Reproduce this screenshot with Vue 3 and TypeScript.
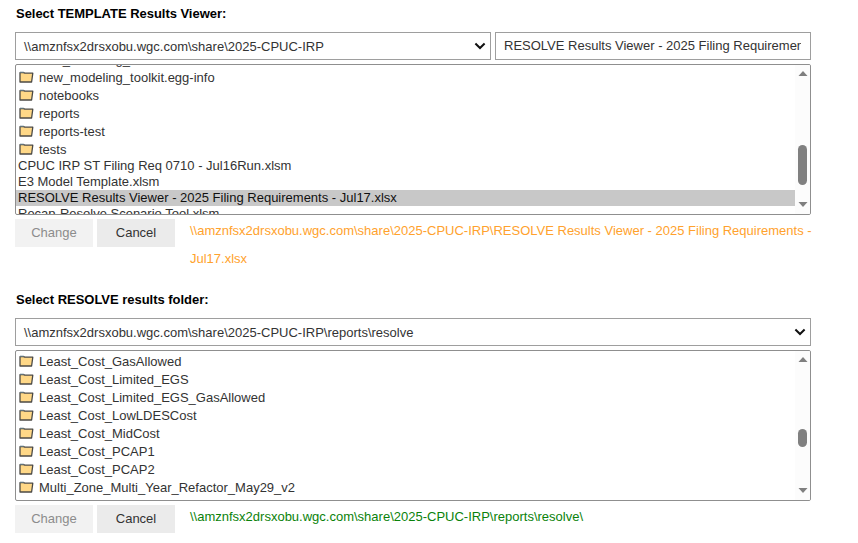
<script setup lang="ts">
interface Entry {
  name: string
  folder?: boolean
  selected?: boolean
}
interface Chooser {
  id: string
  title: string
  path: string
  filename?: string
  entries: Entry[]
  status: string
}

const folders = (names: string[]): Entry[] => names.map((name) => ({ name, folder: true }))

const choosers: Chooser[] = [
  {
    id: 'template',
    title: 'Select TEMPLATE Results Viewer:',
    path: '\\\\amznfsx2drsxobu.wgc.com\\share\\2025-CPUC-IRP',
    filename: 'RESOLVE Results Viewer - 2025 Filing Requiremen',
    entries: [
      ...folders(['new_modeling_toolkit', 'new_modeling_toolkit.egg-info', 'notebooks', 'reports', 'reports-test', 'tests']),
      { name: 'CPUC IRP ST Filing Req 0710 - Jul16Run.xlsm' },
      { name: 'E3 Model Template.xlsm' },
      { name: 'RESOLVE Results Viewer - 2025 Filing Requirements - Jul17.xlsx', selected: true },
      { name: 'Recap-Resolve Scenario Tool.xlsm' },
    ],
    status: '\\\\amznfsx2drsxobu.wgc.com\\share\\2025-CPUC-IRP\\RESOLVE Results Viewer - 2025 Filing Requirements - Jul17.xlsx',
  },
  {
    id: 'results',
    title: 'Select RESOLVE results folder:',
    path: '\\\\amznfsx2drsxobu.wgc.com\\share\\2025-CPUC-IRP\\reports\\resolve',
    entries: folders([
      'Least_Cost_GasAllowed',
      'Least_Cost_Limited_EGS',
      'Least_Cost_Limited_EGS_GasAllowed',
      'Least_Cost_LowLDESCost',
      'Least_Cost_MidCost',
      'Least_Cost_PCAP1',
      'Least_Cost_PCAP2',
      'Multi_Zone_Multi_Year_Refactor_May29_v2',
    ]),
    status: '\\\\amznfsx2drsxobu.wgc.com\\share\\2025-CPUC-IRP\\reports\\resolve\\',
  },
]
</script>

<template>
  <main class="page">
    <section v-for="c in choosers" :key="c.id" class="chooser" :class="c.id">
      <h2 class="title">{{ c.title }}</h2>
      <div class="fields">
        <div class="field path">
          <span class="value">{{ c.path }}</span>
          <svg class="chevron" width="12" height="8" viewBox="0 0 12 8">
            <path d="M1.4 1.5 L6 6 L10.6 1.5" fill="none" stroke="#111" stroke-width="2" />
          </svg>
        </div>
        <div v-if="c.filename" class="field filename"><span class="value">{{ c.filename }}</span></div>
      </div>
      <div class="listbox">
        <ul class="entries">
          <li v-for="e in c.entries" :key="e.name" class="entry" :class="{ folder: e.folder, selected: e.selected }">
            <svg v-if="e.folder" class="icon" width="15" height="12" viewBox="0 0 15 12">
              <path d="M1 11 V1.6 H4.6 L5.8 2.2 H13.8 L12.6 11 Z" fill="#ffd887" stroke="#4c4a45" stroke-width="1.3" stroke-linejoin="round" />
              <path d="M1 1.2 H4.8" stroke="#6f8794" stroke-width="1" />
            </svg>
            <span>{{ e.name }}</span>
          </li>
        </ul>
        <div class="scrollbar">
          <svg width="10" height="5" viewBox="0 0 10 5"><path d="M5 0 L9.5 5 H0.5 Z" fill="#7f7f7f" /></svg>
          <div class="track"><div class="thumb"></div></div>
          <svg width="10" height="5" viewBox="0 0 10 5"><path d="M0.5 0 H9.5 L5 5 Z" fill="#7f7f7f" /></svg>
        </div>
      </div>
      <div class="actions">
        <button class="btn" disabled>Change</button>
        <button class="btn">Cancel</button>
        <div class="status">{{ c.status }}</div>
      </div>
    </section>
  </main>
</template>

<style>
body {
  background: #fff;
}
</style>

<style scoped>
.page {
  box-sizing: border-box;
  width: 858px;
  height: 543px;
  overflow: hidden;
  padding-left: 15px;
  font: 13px/16px "Liberation Sans", Arial, sans-serif;
  color: #333;
}
.chooser {
  width: 798px;
  height: 286px;
}
.title {
  margin: 0;
  padding: 6px 0 10px 1px;
  font-size: 13px;
  line-height: 16px;
  font-weight: 700;
  letter-spacing: -0.03px;
  color: #000;
}
.fields {
  display: flex;
  gap: 4px;
  width: 796px;
}
.field {
  box-sizing: border-box;
  height: 28px;
  border: 1px solid #9e9e9e;
  display: flex;
  align-items: center;
  padding: 0 8px;
  white-space: nowrap;
}
.path {
  flex: 1;
  justify-content: space-between;
  padding-right: 4px;
}
.path .value {
  padding-top: 1px;
}
.filename {
  width: 316px;
}
.filename .value {
  overflow: hidden;
  width: 297px;
}
.listbox {
  box-sizing: border-box;
  width: 796px;
  height: 151px;
  margin-top: 4px;
  border: 1px solid #8f8f8f;
  border-radius: 2px;
  display: flex;
  overflow: hidden;
}
.entries {
  flex: 1;
  margin: 1px 0 0;
  padding: 0;
  list-style: none;
  white-space: nowrap;
}
.template .entries {
  margin-top: -15px;
}
.entry {
  display: flex;
  align-items: center;
  height: 16px;
  padding-left: 2px;
}
.folder {
  box-sizing: border-box;
  height: 18px;
  padding-top: 2px;
}
.icon {
  margin: 0 5px 2px 1px;
  flex: none;
}
.selected {
  background: #c8c8c8;
  color: #101010;
}
.scrollbar {
  box-sizing: border-box;
  width: 15px;
  padding: 6px 0 7px;
  background: #fcfcfc;
  display: flex;
  flex-direction: column;
  align-items: center;
}
.scrollbar svg {
  display: block;
  flex: none;
}
.track {
  flex: 1;
}
.thumb {
  width: 9px;
  height: 40px;
  margin-top: 69px;
  border-radius: 5px;
  background: #808080;
}
.results .thumb {
  height: 18px;
  margin-top: 67px;
}
.actions {
  display: flex;
  gap: 4px;
  margin-top: 4px;
}
.btn {
  flex: none;
  width: 78px;
  height: 28px;
  border: 0;
  padding: 0;
  background: #ebebeb;
  color: #333;
  font: inherit;
}
.btn:disabled {
  background: #f2f2f2;
  color: #8c8c8c;
}
.status {
  flex: 1;
  margin-top: -2px;
  padding-left: 11px;
  line-height: 28px;
  color: #ffa22d;
}
.results .status {
  color: #0a820a;
}
</style>
